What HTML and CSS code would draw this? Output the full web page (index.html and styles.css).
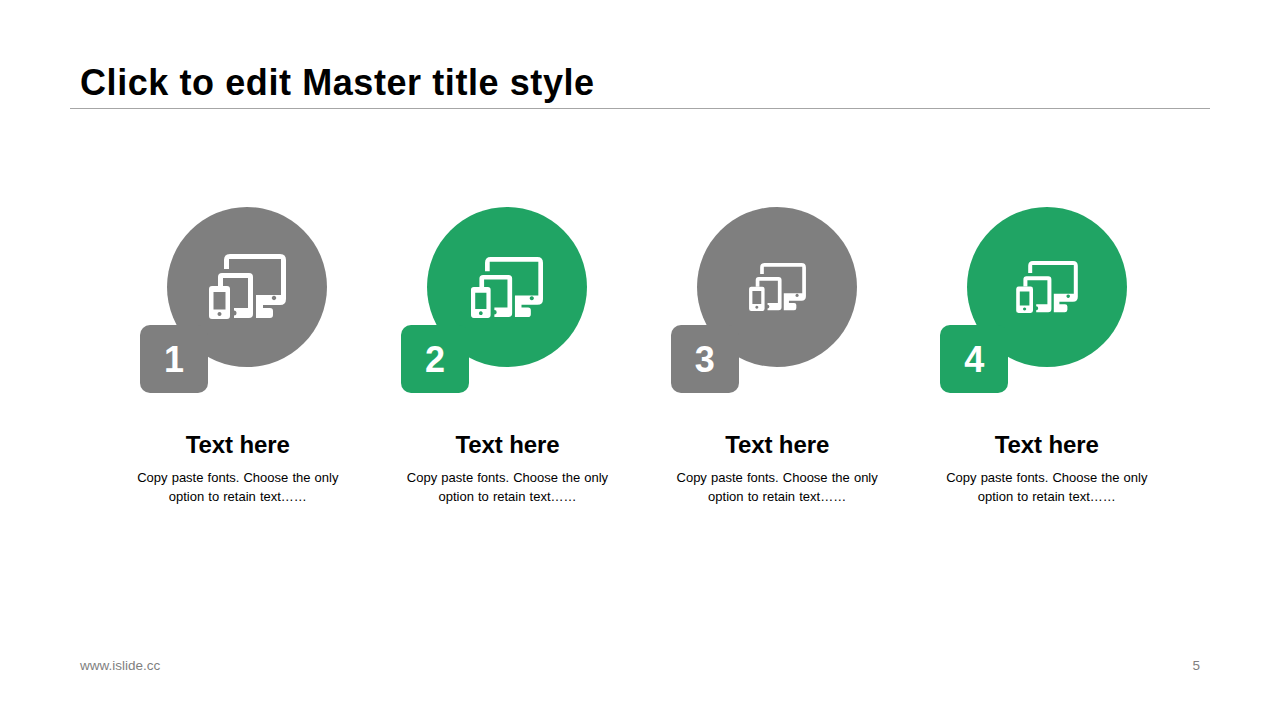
FILE: index.html
```html
<!DOCTYPE html>
<html lang="en">
<head>
<meta charset="utf-8">
<title>Click to edit Master title style</title>
<link rel="stylesheet" href="styles.css">
</head>
<body>
<svg class="defs" width="0" height="0" aria-hidden="true">
  <symbol id="devices" viewBox="0 0 77 65">
    <path fill-rule="evenodd" d="M15 15V6Q15 0 21 0H71Q77 0 77 6V45Q77 51 71 51H54V54H61Q64 54 64 57V61Q64 64 61 64H47V41H72V5H20V15ZM65 41.8a2.2 2.2 0 1 0 0.01 0Z"/>
    <path d="M9 32V23Q9 19 13 19H40Q44 19 44 23V60Q44 64 40 64H25V61.5A2.5 2.5 0 0 0 25 56.5V54H39V24H14V32Z"/>
    <path fill-rule="evenodd" d="M3 32H18Q21 32 21 35V62Q21 65 18 65H3Q0 65 0 62V35Q0 32 3 32ZM4.5 38V55.5H16.5V38ZM10.5 58a2 2 0 1 0 0.01 0Z"/>
  </symbol>
</svg>
<main class="slide">
  <header class="head"><h1 class="title">Click to edit Master title style</h1></header>
  <section class="cards">
    <article class="card">
      <div class="graphic graphic-first">
        <div class="circle grey"><svg class="icon icon-a"><use href="#devices"/></svg></div>
        <div class="badge grey">1</div>
      </div>
      <h2 class="card-title">Text here</h2>
      <p class="card-text">Copy paste fonts. Choose the only<br>option to retain text……</p>
    </article>
    <article class="card">
      <div class="graphic">
        <div class="circle green"><svg class="icon icon-b"><use href="#devices"/></svg></div>
        <div class="badge green">2</div>
      </div>
      <h2 class="card-title">Text here</h2>
      <p class="card-text">Copy paste fonts. Choose the only<br>option to retain text……</p>
    </article>
    <article class="card">
      <div class="graphic">
        <div class="circle grey"><svg class="icon icon-c"><use href="#devices"/></svg></div>
        <div class="badge grey">3</div>
      </div>
      <h2 class="card-title">Text here</h2>
      <p class="card-text">Copy paste fonts. Choose the only<br>option to retain text……</p>
    </article>
    <article class="card">
      <div class="graphic">
        <div class="circle green"><svg class="icon icon-d"><use href="#devices"/></svg></div>
        <div class="badge green">4</div>
      </div>
      <h2 class="card-title">Text here</h2>
      <p class="card-text">Copy paste fonts. Choose the only<br>option to retain text……</p>
    </article>
  </section>
  <footer class="foot"><span>www.islide.cc</span><span>5</span></footer>
</main>
</body>
</html>
```
FILE: styles.css
```css
* { box-sizing: border-box; }
html, body { margin: 0; padding: 0; background: #fff; }
body { font-family: "Liberation Sans", Arial, sans-serif; color: #000; }
.defs { display: block; height: 0; }
.slide { width: 1280px; height: 720px; display: flex; flex-direction: column; overflow: hidden; }
.head { margin: 0 70px; padding: 59px 10px 0; height: 109px; border-bottom: 1px solid #a6a6a6; }
.title { margin: 0; font-size: 36px; line-height: 48px; font-weight: 700; letter-spacing: 0.58px; }
.cards { display: flex; padding: 98px 0 0 103px; flex: 1; }
.card { width: 269.67px; display: flex; flex-direction: column; align-items: center; }
.graphic { position: relative; align-self: flex-start; width: 187px; height: 185px; margin-left: 28.4px; padding-left: 26.3px; }
.graphic-first { margin-left: 37px; padding-left: 27px; }
.circle { width: 160px; height: 160px; border-radius: 50%; display: flex; align-items: center; justify-content: center; }
.grey { background: #7f7f7f; }
.green { background: #20a464; }
.icon { display: block; fill: #fff; }
.icon-a { width: 77px; height: 65px; margin-top: -1px; }
.icon-b { width: 72px; height: 61px; }
.icon-c { width: 57px; height: 48px; }
.icon-d { width: 62px; height: 52px; }
.badge { position: absolute; left: 0; top: 118px; width: 68px; height: 67.5px; padding-top: 2px; border-radius: 10px; color: #fff; font-size: 36px; font-weight: 700; display: flex; align-items: center; justify-content: center; }
.card-title { margin: 38px 0 0; font-size: 24px; line-height: 30px; font-weight: 700; text-align: center; letter-spacing: -0.1px; }
.card-text { margin: 8px 0 0; font-size: 13px; line-height: 19px; text-align: center; word-spacing: 0.5px; }
.foot { display: flex; justify-content: space-between; padding: 0 80px 46px; font-size: 13.5px; line-height: 16px; color: #7f7f7f; }
```
